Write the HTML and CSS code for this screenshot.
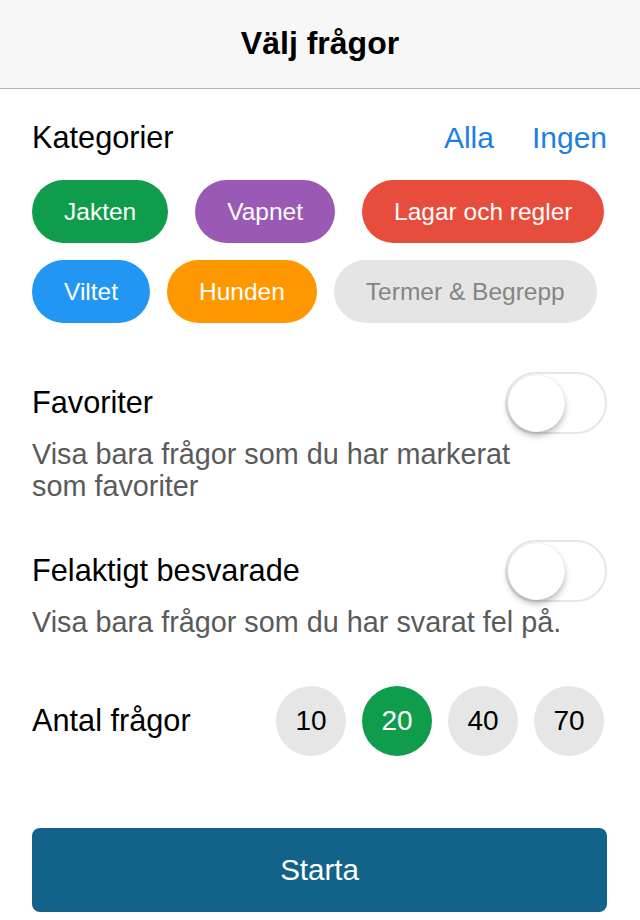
FILE: index.html
```html
<!DOCTYPE html>
<html lang="sv">
<head>
<meta charset="utf-8">
<title>Välj frågor</title>
<link rel="stylesheet" href="styles.css">
</head>
<body>
<header class="navbar">
  <h1 class="nav-title">Välj frågor</h1>
</header>
<main class="content">
  <div class="cat-head">
    <span class="label">Kategorier</span>
    <div class="links">
      <a class="link">Alla</a>
      <a class="link">Ingen</a>
    </div>
  </div>
  <div class="pill-row row-1">
    <span class="pill green">Jakten</span>
    <span class="pill purple">Vapnet</span>
    <span class="pill red">Lagar och regler</span>
  </div>
  <div class="pill-row row-2">
    <span class="pill blue">Viltet</span>
    <span class="pill orange">Hunden</span>
    <span class="pill gray">Termer &amp; Begrepp</span>
  </div>

  <div class="toggle-row first">
    <span class="label">Favoriter</span>
    <span class="switch"><span class="knob"></span></span>
  </div>
  <p class="desc">Visa bara frågor som du har markerat<br>som favoriter</p>

  <div class="toggle-row second">
    <span class="label">Felaktigt besvarade</span>
    <span class="switch"><span class="knob"></span></span>
  </div>
  <p class="desc">Visa bara frågor som du har svarat fel på.</p>

  <div class="count-row">
    <span class="label">Antal frågor</span>
    <div class="counts">
      <span class="count">10</span>
      <span class="count active">20</span>
      <span class="count">40</span>
      <span class="count">70</span>
    </div>
  </div>

  <button class="start">Starta</button>
</main>
</body>
</html>
```

FILE: styles.css
```css
* { box-sizing: border-box; }
html, body {
  margin: 0;
  padding: 0;
  background: #ffffff;
  font-family: "Liberation Sans", Arial, Helvetica, sans-serif;
  color: #000;
}
.navbar {
  height: 89px;
  background: #f7f7f7;
  border-bottom: 1px solid #b2b2b2;
  display: flex;
  align-items: center;
  justify-content: center;
}
.nav-title {
  margin: 0;
  font-size: 32px;
  font-weight: bold;
  line-height: 36px;
  padding-bottom: 2px;
}
.content {
  padding: 0 33px 0 32px;
}
.label {
  font-size: 30.7px;
  line-height: 36px;
}
.cat-head {
  margin-top: 31px;
  display: flex;
  justify-content: space-between;
  align-items: center;
}
.links {
  display: flex;
  gap: 38px;
}
.link {
  font-size: 30px;
  line-height: 36px;
  color: #1b7fe3;
}
.pill-row {
  display: flex;
}
.row-1 {
  margin-top: 24px;
  gap: 27px;
}
.row-2 {
  margin-top: 17px;
  gap: 17px;
}
.pill {
  height: 63px;
  line-height: 63px;
  padding: 0 32px;
  border-radius: 32px;
  font-size: 24.5px;
  color: #fff;
  white-space: nowrap;
}
.green { background: #109d4b; }
.purple { background: #9b59b6; }
.red { background: #e74c3c; }
.blue { background: #2196f3; }
.orange { background: #ff9800; }
.gray { background: #e5e5e5; color: #858585; }

.toggle-row {
  display: flex;
  justify-content: space-between;
  align-items: center;
  height: 62px;
}
.toggle-row.first { margin-top: 49px; }
.toggle-row.second { margin-top: 38px; }
.switch {
  width: 102px;
  height: 62px;
  border-radius: 31px;
  border: 2px solid #e6e6e6;
  background: #fff;
  display: flex;
  align-items: center;
  padding-left: 1px;
}
.knob {
  width: 57px;
  height: 57px;
  border-radius: 50%;
  background: #fff;
  box-shadow: 0 4px 6px rgba(0,0,0,0.26), 0 0 1px rgba(0,0,0,0.2);
}
.desc {
  margin: 4px 0 0;
  font-size: 28.8px;
  line-height: 32px;
  color: #5a5a5a;
}
.count-row {
  margin-top: 48px;
  display: flex;
  justify-content: space-between;
  align-items: center;
  padding-right: 3px;
}
.counts {
  display: flex;
  gap: 16px;
}
.count {
  width: 70px;
  height: 70px;
  border-radius: 50%;
  background: #e6e6e6;
  display: flex;
  align-items: center;
  justify-content: center;
  font-size: 28px;
  color: #000;
}
.count.active {
  background: #109d4b;
  color: #fff;
}
.start {
  display: block;
  width: 100%;
  margin-top: 72px;
  height: 84px;
  border: 0;
  border-radius: 8px;
  background: #13628a;
  color: #fff;
  font-family: "Liberation Sans", Arial, Helvetica, sans-serif;
  font-size: 29.5px;
  padding: 0;
}
```
